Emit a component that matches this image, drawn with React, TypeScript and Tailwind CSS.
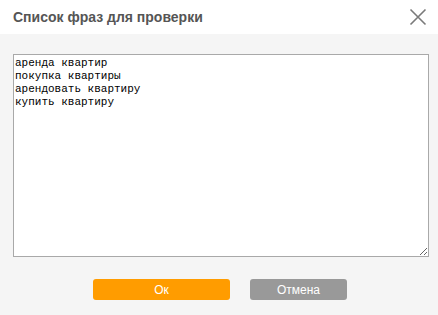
export default function App() {
  const phrases = ["аренда квартир", "покупка квартиры", "арендовать квартиру", "купить квартиру"];

  return (
    <div className="flex h-[315px] w-[438px] flex-col bg-[#f5f5f5] font-['Liberation_Sans',Arial,sans-serif]">
      <div className="flex h-[34px] items-center justify-between bg-white pl-[13px] pr-[8px]">
        <h1 className="text-[14px] font-bold text-[#555555]">Список фраз для проверки</h1>
        <button className="flex h-[24px] w-[24px] items-center justify-center text-[#7a7a7a]">
          <svg width="18" height="18" viewBox="0 0 18 18" fill="none" stroke="currentColor" strokeWidth="1.6">
            <path d="M1.5 1.5 L16.5 16.5 M16.5 1.5 L1.5 16.5" />
          </svg>
        </button>
      </div>

      <div className="flex flex-1 flex-col px-[13px] pt-[20px]">
        <textarea
          className="h-[203px] w-[416px] resize-y border border-[#a9a9a9] bg-white px-[1px] py-[2px] font-['Liberation_Mono',monospace] text-[11px] leading-[13px] text-black outline-none"
          defaultValue={phrases.join("\n")}
        />

        <div className="mt-[22px] ml-[2px] flex justify-center gap-[20px]">
          <button className="h-[21px] w-[137px] rounded-[3px] bg-[#ff9c00] text-[12px] text-white">Ок</button>
          <button className="h-[21px] w-[97px] rounded-[3px] bg-[#999999] text-[12px] text-white">Отмена</button>
        </div>
      </div>
    </div>
  );
}
